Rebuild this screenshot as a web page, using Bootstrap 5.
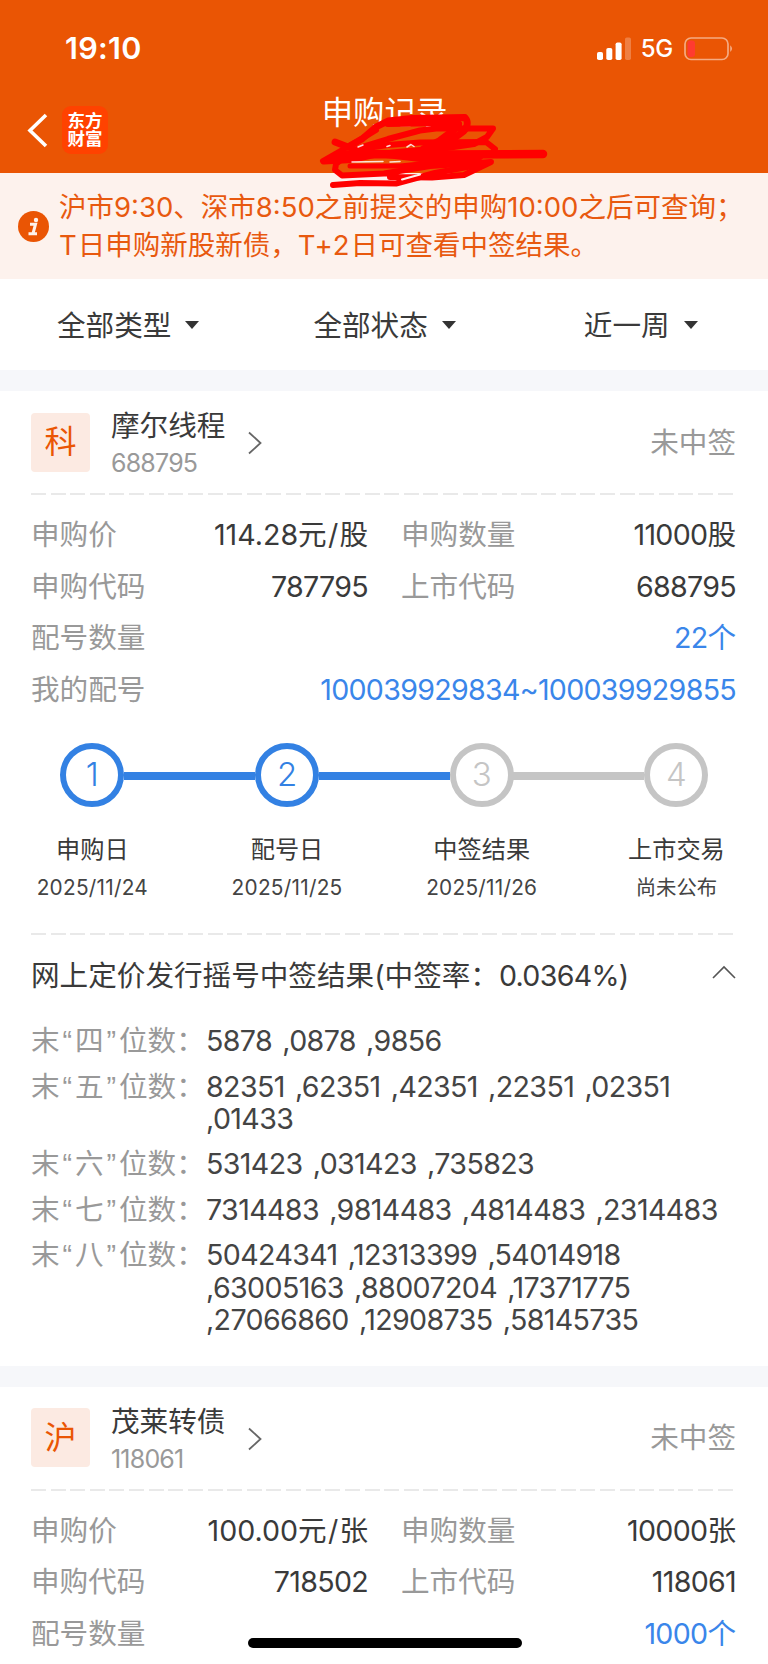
<!DOCTYPE html>
<html lang="zh-CN">
<head>
<meta charset="utf-8">
<meta name="viewport" content="width=device-width, initial-scale=1">
<title>申购记录</title>
<link href="https://cdn.jsdelivr.net/npm/bootstrap@5.3.0/dist/css/bootstrap.min.css" rel="stylesheet">
<style>
body{font-family:Inter,"Noto Sans CJK SC",sans-serif;font-size:28.6px;line-height:1;color:#3a3a3a;background:#fff}
.screen{width:768px;height:1664px;white-space:nowrap}
.n{letter-spacing:-.7px}
.price{letter-spacing:0}
.slash{margin:0 1.2px}
.topbar{height:173px;background:#ea5504;color:#fff}
.status{height:98px;padding:0 34px 0 65px}
.clock{font-size:30.5px;font-weight:600;letter-spacing:.3px;margin-top:-1px}
.net{font-size:24px;font-weight:500;letter-spacing:-.3px;margin:0 11px 0 8px}
.navrow{height:75px}
.applogo{width:46px;height:48px;border-radius:9px;background:#ff4200;font-size:17.5px;font-weight:700;line-height:18.5px;margin-left:14px}
.pagetitle{font-size:31.4px;left:0;right:0;top:0;margin-left:1px}
.scribble{left:310px;top:105px}
.notice{height:106px;background:#fdf2ed;color:#e8590f;font-size:27.5px;line-height:37.6px;padding:2px 0 0 18px}
.notice p{margin-left:10px}
.notice svg{margin-top:-2px}
.wide-latin{letter-spacing:1px}
.filters{height:91px;padding-top:4px}
.caret{width:0;height:0;border:7.2px solid transparent;border-top:8.5px solid #333;border-bottom:0;margin:-3px 0 0 14px}
.gapbar{height:21px;background:#f6f7fa}
.rec{padding:0 32px 0 31px}
.rechead{height:102px;padding-top:2px}
.mkt{width:59px;height:59px;border-radius:4px;background:#fceae2;color:#ea5504;font-size:32px;margin-top:-2px}
.code{font-size:25px;color:#999;letter-spacing:-.8px;margin-top:10px;margin-bottom:-2px}
.gray{color:#999}
.blue{color:#3a86ea}
.dash{height:2px;background:repeating-linear-gradient(90deg,#e9e9e9 0 15px,transparent 15px 19.62px)}
.info{display:grid;grid-template-columns:337px 335px;column-gap:33px;grid-auto-rows:51.6px;padding-top:14.5px;align-items:center}
.info>div{display:flex;justify-content:space-between;align-items:center}
.info .wide{grid-column:1/3}
.steps{height:217px;padding-top:27px;margin:0 -2px}
.step{width:194.7px}
.dot{width:64px;height:64px;border:6.5px solid #c5c5c5;border-radius:50%;color:#c5c5c5;font-size:33px;font-weight:300}
.line{height:8px;width:131px;background:#c5c5c5;left:129px;top:29px}
.on .dot{border-color:#3381e3;color:#3381e3}
.on .line{background:#3381e3}
.lbl{font-size:24.2px;margin-top:31px}
.date{font-size:20.8px;margin-top:16px;color:#444;height:22px;letter-spacing:.25px}
.date.cn{font-size:20.4px;letter-spacing:0}
.resulthead{height:82px}
.results{padding-top:8.400px}
.res{line-height:32.6px;margin-bottom:12.7px;color:#444}
.res .n{letter-spacing:-.62px;word-spacing:2.800px}
.res .gray{width:175px;height:32.6px}
.q{display:inline-block;width:15.4px;text-align:center;font-style:normal;line-height:1;font-family:"Liberation Sans",sans-serif}
.home{left:248px;top:1638px;width:274px;height:10px;background:#000;border-radius:5px}
</style>
</head>
<body>
<div class="screen position-relative overflow-hidden">
  <header class="topbar">
    <div class="status d-flex justify-content-between align-items-center">
      <div class="clock">19:10</div>
      <div class="d-flex align-items-center">
        <svg width="36" height="24" viewBox="0 0 36 24" fill="#fff"><rect x="0" y="15" width="6" height="8" rx="1.8"/><rect x="9.3" y="11" width="6" height="12" rx="1.8"/><rect x="18.6" y="5.500" width="6" height="17.500" rx="1.8"/><rect x="28" y="0.500" width="6" height="22.500" rx="1.8" opacity=".25"/></svg>
        <span class="net">5G</span>
        <svg width="50" height="24" viewBox="0 0 50 24"><rect x="1" y="1" width="43" height="21.500" rx="6" fill="none" stroke="#fff" stroke-opacity=".5" stroke-width="1.7"/><rect x="3.500" y="3.500" width="7.500" height="16.500" rx="3" fill="#ff3b30"/><path d="M46.200 8.300q3.800 3.400 0 6.800z" fill="#fff" opacity=".5"/></svg>
      </div>
    </div>
    <div class="navrow position-relative">
      <div class="pagetitle position-absolute text-center">申购记录</div>
      <div class="d-flex pt-2">
        <svg style="margin-left:26px" width="22" height="48" viewBox="0 0 22 48" fill="none" stroke="#fff" stroke-width="3.6"><path d="M20 9 4 24.500 20 40"/></svg>
        <div class="applogo d-flex flex-column align-items-center justify-content-center"><span>东方</span><span>财富</span></div>
      </div>
    </div>
  </header>
  <svg class="scribble position-absolute" width="250" height="90" viewBox="310 105 250 90" fill="none" stroke="#f00" stroke-width="6.800" stroke-linecap="round" stroke-linejoin="round">
    <path d="M335 142 348 147 362 139 376 127 388 121 412 118.500 465 117.500Q470 123 464 131L448 143 425 150 392 153"/>
    <path d="M388 123 445 122 458 125" stroke-width="8"/>
    <path d="M458 124 452 132 440 141 424 149" stroke-width="8"/>
    <path d="M376 130 358 141 323 161 345 155 365 146 388 139 420 130.500 436 128.500 493 128.500 487 137 474 144 440 149 400 155" stroke-width="6"/>
    <path d="M352 150 388 145 420 142.500 486 142 495 149 492 154" stroke-width="6"/>
    <path d="M336 157 372 154 430 154.500 543 154" stroke-width="8.500"/>
    <path d="M324 161.500 352 160 378 154 420 159 480 157" stroke-width="6"/>
    <path d="M343 158 336 164 335 170 342 175.500 384 173.500 430 166 491 162 464 175 432 177.500 390 177" stroke-width="6"/>
    <path d="M350 166 400 166 430 163 480 162" stroke-width="5"/>
    <path d="M333 185 360 183 396 183.500 435 173 478 165" stroke-width="6"/>
    <g stroke="#fff" stroke-width="1.500" opacity=".85"><path d="M358 147l5-2M387 146.500l3-1M407 147l4-2.500 3 2M352 162l31-.5M390 162l10-.5"/></g>
    <path d="M402 179.500 420 174.500" stroke="#fdf2ed" stroke-width="2"/>
  </svg>

  <section class="notice d-flex align-items-center">
    <svg width="31" height="31" viewBox="0 0 31 31"><circle cx="15.500" cy="15.500" r="15.500" fill="#ea5504"/><g fill="none" stroke="#fdf2ed" stroke-width="3"><path d="M12 13.300h5.500L15 22.500M10.500 22.700h8.500"/></g><circle cx="18" cy="9" r="2.200" fill="#fdf2ed"/></svg>
    <p class="mb-0">沪市9:30、深市8:50之前提交的申购10:00之后可查询；<br><span class="wide-latin">T</span>日申购新股新债，<span class="wide-latin">T+2</span>日可查看中签结果。</p>
  </section>

  <nav class="filters d-flex align-items-center">
    <div class="d-flex align-items-center" style="margin-left:57px">全部类型<i class="caret"></i></div>
    <div class="d-flex align-items-center" style="margin-left:114px">全部状态<i class="caret"></i></div>
    <div class="d-flex align-items-center" style="margin-left:128px">近一周<i class="caret"></i></div>
  </nav>
  <div class="gapbar"></div>

  <article class="rec">
    <div class="rechead d-flex align-items-center">
      <div class="mkt d-flex align-items-center justify-content-center">科</div>
      <div style="margin-left:21px"><div>摩尔线程</div><div class="code">688795</div></div>
      <svg style="margin-left:22px" width="16" height="24" viewBox="0 0 16 24" fill="none" stroke="#666" stroke-width="1.800"><path d="M2 1.500 13.500 12 2 22.500"/></svg>
      <div class="gray ms-auto">未中签</div>
    </div>
    <div class="dash"></div>
    <div class="info">
      <div><span class="gray">申购价</span><span><span class="price">114.28</span>元<span class="slash">/</span>股</span></div>
      <div><span class="gray">申购数量</span><span><span class="n">11000</span>股</span></div>
      <div><span class="gray">申购代码</span><span class="n">787795</span></div>
      <div><span class="gray">上市代码</span><span class="n">688795</span></div>
      <div class="wide"><span class="gray">配号数量</span><span class="blue"><span class="n">22</span>个</span></div>
      <div class="wide"><span class="gray">我的配号</span><span class="n blue">100039929834~100039929855</span></div>
    </div>
    <div class="steps d-flex">
      <div class="step on position-relative d-flex flex-column align-items-center flex-shrink-0" style="margin-left:-34px"><div class="line position-absolute"></div><div class="dot d-flex align-items-center justify-content-center">1</div><div class="lbl">申购日</div><div class="date">2025/11/24</div></div>
      <div class="step on position-relative d-flex flex-column align-items-center flex-shrink-0"><div class="line position-absolute"></div><div class="dot d-flex align-items-center justify-content-center">2</div><div class="lbl">配号日</div><div class="date">2025/11/25</div></div>
      <div class="step position-relative d-flex flex-column align-items-center flex-shrink-0"><div class="line position-absolute"></div><div class="dot d-flex align-items-center justify-content-center">3</div><div class="lbl">中签结果</div><div class="date">2025/11/26</div></div>
      <div class="step position-relative d-flex flex-column align-items-center flex-shrink-0"><div class="dot d-flex align-items-center justify-content-center">4</div><div class="lbl">上市交易</div><div class="date cn">尚未公布</div></div>
    </div>
    <div class="dash"></div>
    <div class="resulthead d-flex align-items-center justify-content-between">
      <span>网上定价发行摇号中签结果(中签率：<span class="n">0.0364%)</span></span>
      <svg width="24" height="24" viewBox="0 0 24 24" fill="none" stroke="#555" stroke-width="1.600"><path d="M1 14 12 3 23 14"/></svg>
    </div>
    <div class="results">
      <div class="res d-flex"><div class="gray">末<i class="q">“</i>四<i class="q">”</i>位数：</div><div class="n">5878 ,0878 ,9856</div></div>
      <div class="res d-flex"><div class="gray">末<i class="q">“</i>五<i class="q">”</i>位数：</div><div class="n">82351 ,62351 ,42351 ,22351 ,02351<br>,01433</div></div>
      <div class="res d-flex"><div class="gray">末<i class="q">“</i>六<i class="q">”</i>位数：</div><div class="n">531423 ,031423 ,735823</div></div>
      <div class="res d-flex"><div class="gray">末<i class="q">“</i>七<i class="q">”</i>位数：</div><div class="n">7314483 ,9814483 ,4814483 ,2314483</div></div>
      <div class="res d-flex"><div class="gray">末<i class="q">“</i>八<i class="q">”</i>位数：</div><div class="n">50424341 ,12313399 ,54014918<br>,63005163 ,88007204 ,17371775<br>,27066860 ,12908735 ,58145735</div></div>
    </div>
  </article>
  <div class="gapbar" style="margin-top:29px"></div>

  <article class="rec">
    <div class="rechead d-flex align-items-center">
      <div class="mkt d-flex align-items-center justify-content-center">沪</div>
      <div style="margin-left:21px"><div>茂莱转债</div><div class="code">118061</div></div>
      <svg style="margin-left:22px" width="16" height="24" viewBox="0 0 16 24" fill="none" stroke="#666" stroke-width="1.800"><path d="M2 1.500 13.500 12 2 22.500"/></svg>
      <div class="gray ms-auto">未中签</div>
    </div>
    <div class="dash"></div>
    <div class="info">
      <div><span class="gray">申购价</span><span><span class="price">100.00</span>元<span class="slash">/</span>张</span></div>
      <div><span class="gray">申购数量</span><span><span class="n">10000</span>张</span></div>
      <div><span class="gray">申购代码</span><span class="n">718502</span></div>
      <div><span class="gray">上市代码</span><span class="n">118061</span></div>
      <div class="wide"><span class="gray">配号数量</span><span class="blue"><span class="n">1000</span>个</span></div>
    </div>
  </article>
  <div class="home position-absolute"></div>
</div>
<script src="https://cdn.jsdelivr.net/npm/bootstrap@5.3.0/dist/js/bootstrap.bundle.min.js"></script>
</body>
</html>
